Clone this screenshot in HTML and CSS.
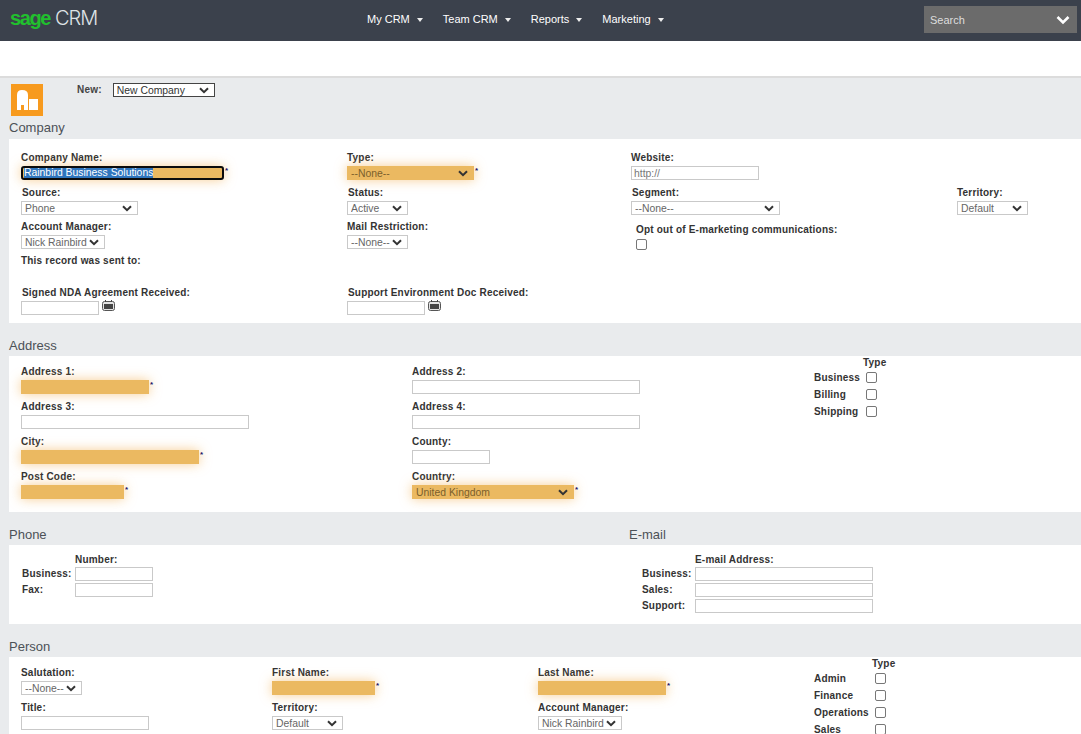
FILE: index.html
```html
<!DOCTYPE html>
<html lang="en">
<head>
  <meta charset="UTF-8" />
  <title>Sage CRM - New Company</title>
  <link rel="stylesheet" href="styles.css">
</head>
<body>
  <header class="topbar">
    <div class="logo"><span class="logo-sage">sage</span><span class="logo-crm">CRM</span></div>
    <nav class="menu">
      <a class="menu-item">My CRM</a>
      <a class="menu-item">Team CRM</a>
      <a class="menu-item">Reports</a>
      <a class="menu-item">Marketing</a>
    </nav>
    <div class="search">
      <span>Search</span>
      <svg width="14" height="10" viewBox="0 0 14 10"><path d="M1.5 2 L7 7.5 L12.5 2" fill="none" stroke="#fff" stroke-width="2.6"/></svg>
    </div>
  </header>
  <div class="subbar"></div>

  <div class="newbar">
    <div class="entity-icon">
      <svg width="32" height="32" viewBox="0 0 32 32">
        <path d="M6 26 V11 Q6 6 11 6 Q17 6 17 11 V26 H13 V21 H10 V26 Z" fill="#fff"/>
        <rect x="18" y="15" width="9" height="11" fill="#fff"/>
      </svg>
    </div>
    <label class="new-label">New:</label>
    <select class="new-select"><option>New Company</option></select>
  </div>

  <h2 class="section-title first">Company</h2>
  <section class="panel company-panel">
    <div class="fields company-fields">
      <div class="field">
        <label>Company Name:</label>
        <div class="req-wrap">
          <div class="name-input"><span class="selected">Rainbird Business Solutions</span></div><i>*</i>
        </div>
      </div>
      <div class="field">
        <label>Type:</label>
        <div class="req-wrap"><select class="req w-127"><option>--None--</option></select><i>*</i></div>
      </div>
      <div class="field span-2">
        <label>Website:</label>
        <input class="w-128 hint" value="http://">
      </div>

      <div class="field">
        <label class="nudge">Source:</label>
        <select class="w-117"><option>Phone</option></select>
      </div>
      <div class="field">
        <label class="nudge">Status:</label>
        <select class="w-61"><option>Active</option></select>
      </div>
      <div class="field">
        <label class="nudge">Segment:</label>
        <select class="w-149"><option>--None--</option></select>
      </div>
      <div class="field">
        <label>Territory:</label>
        <select class="w-71"><option>Default</option></select>
      </div>

      <div class="field">
        <label>Account Manager:</label>
        <select class="w-84"><option>Nick Rainbird</option></select>
      </div>
      <div class="field">
        <label>Mail Restriction:</label>
        <select class="w-61"><option>--None--</option></select>
      </div>
      <div class="field span-2 optout">
        <label>Opt out of E-marketing communications:</label>
        <input type="checkbox">
      </div>

      <div class="field span-4">
        <label>This record was sent to:</label>
      </div>

      <div class="field">
        <label class="nudge">Signed NDA Agreement Received:</label>
        <div class="date-wrap"><input class="w-78"><svg class="cal" width="13" height="11" viewBox="0 0 13 11"><rect x="0.5" y="1.5" width="12" height="9" rx="2" fill="#e3e3e3" stroke="#555"/><rect x="2" y="4" width="9" height="5" fill="#444"/><path d="M3.5 0 V2 M9.5 0 V2" stroke="#444"/></svg></div>
      </div>
      <div class="field span-3">
        <label class="nudge">Support Environment Doc Received:</label>
        <div class="date-wrap"><input class="w-78"><svg class="cal" width="13" height="11" viewBox="0 0 13 11"><rect x="0.5" y="1.5" width="12" height="9" rx="2" fill="#e3e3e3" stroke="#555"/><rect x="2" y="4" width="9" height="5" fill="#444"/><path d="M3.5 0 V2 M9.5 0 V2" stroke="#444"/></svg></div>
      </div>
    </div>
  </section>

  <h2 class="section-title">Address</h2>
  <section class="panel address-panel">
    <div class="fields address-fields">
      <div class="field">
        <label>Address 1:</label>
        <div class="req-wrap"><input class="req w-128"><i>*</i></div>
      </div>
      <div class="field">
        <label>Address 2:</label>
        <input class="w-228">
      </div>
      <div class="field">
        <label>Address 3:</label>
        <input class="w-228">
      </div>
      <div class="field">
        <label>Address 4:</label>
        <input class="w-228">
      </div>
      <div class="field">
        <label>City:</label>
        <div class="req-wrap"><input class="req w-178"><i>*</i></div>
      </div>
      <div class="field">
        <label>County:</label>
        <input class="w-78">
      </div>
      <div class="field">
        <label>Post Code:</label>
        <div class="req-wrap"><input class="req w-103"><i>*</i></div>
      </div>
      <div class="field">
        <label>Country:</label>
        <div class="req-wrap"><select class="req w-162"><option>United Kingdom</option></select><i>*</i></div>
      </div>
    </div>
    <div class="type-group address-type">
      <div class="type-head">Type</div>
      <div class="type-row"><label>Business</label><input type="checkbox"></div>
      <div class="type-row"><label>Billing</label><input type="checkbox"></div>
      <div class="type-row"><label>Shipping</label><input type="checkbox"></div>
    </div>
  </section>

  <div class="title-pair">
    <h2 class="section-title">Phone</h2>
    <h2 class="section-title">E-mail</h2>
  </div>
  <section class="panel contact-panel">
    <div class="contact phone">
      <div></div><label class="contact-head">Number:</label>
      <label>Business:</label><input class="w-78">
      <label>Fax:</label><input class="w-78">
    </div>
    <div class="contact email">
      <div></div><label class="contact-head">E-mail Address:</label>
      <label>Business:</label><input class="w-178">
      <label>Sales:</label><input class="w-178">
      <label>Support:</label><input class="w-178">
    </div>
  </section>

  <h2 class="section-title">Person</h2>
  <section class="panel person-panel">
    <div class="fields person-fields">
      <div class="field">
        <label>Salutation:</label>
        <select class="w-61"><option>--None--</option></select>
      </div>
      <div class="field">
        <label>First Name:</label>
        <div class="req-wrap"><input class="req w-103"><i>*</i></div>
      </div>
      <div class="field">
        <label>Last Name:</label>
        <div class="req-wrap"><input class="req w-128"><i>*</i></div>
      </div>
      <div class="field">
        <label>Title:</label>
        <input class="w-128">
      </div>
      <div class="field">
        <label>Territory:</label>
        <select class="w-71"><option>Default</option></select>
      </div>
      <div class="field">
        <label>Account Manager:</label>
        <select class="w-84"><option>Nick Rainbird</option></select>
      </div>
    </div>
    <div class="type-group person-type">
      <div class="type-head">Type</div>
      <div class="type-row"><label>Admin</label><input type="checkbox"></div>
      <div class="type-row"><label>Finance</label><input type="checkbox"></div>
      <div class="type-row"><label>Operations</label><input type="checkbox"></div>
      <div class="type-row"><label>Sales</label><input type="checkbox"></div>
    </div>
  </section>
</body>
</html>
```

FILE: styles.css
```css
html, body {
  height: 100%;
  overflow: hidden;
}

body {
  margin: 0;
  background: #e9ebed;
  font-family: "Liberation Sans", Arial, sans-serif;
  font-size: 11px;
  color: #333;
}

/* top bar */
.topbar {
  display: flex;
  align-items: center;
  height: 41px;
  background: #3b414c;
}

.logo {
  display: flex;
  align-items: baseline;
  width: 367px;
  padding: 0 0 5px 10px;
  box-sizing: border-box;
}

.logo-sage {
  color: #21c02e;
  font-size: 20px;
  font-weight: bold;
  letter-spacing: -1.4px;
}

.logo-crm {
  margin-left: 5px;
  color: #dfe3e6;
  font-family: Inter, sans-serif;
  font-size: 20px;
  font-weight: 300;
  letter-spacing: -1px;
}

.menu {
  display: flex;
  gap: 14px;
  margin-bottom: 3px;
}

.menu-item {
  color: #fff;
  font-size: 11px;
  padding-right: 19px;
  position: relative;
}

.menu-item::after {
  content: "";
  position: absolute;
  right: 6px;
  top: 5px;
  border-left: 3.5px solid transparent;
  border-right: 3.5px solid transparent;
  border-top: 4px solid #eee;
}

.search {
  display: flex;
  align-items: center;
  justify-content: space-between;
  margin-left: auto;
  margin-right: 4px;
  margin-bottom: 2px;
  width: 153px;
  height: 27px;
  padding: 0 7px 0 6px;
  box-sizing: border-box;
  background: #6b6b6b;
  color: #ddd;
  font-size: 11px;
}

.subbar {
  height: 35px;
  background: #fff;
  border-bottom: 2px solid #dcdcdc;
}

/* new company row */
.newbar {
  display: flex;
  align-items: flex-start;
  height: 32px;
  padding: 6px 0 0 11px;
}

.entity-icon {
  width: 32px;
  height: 32px;
  background: #f79a1e;
}

.new-label {
  margin-left: 34px;
  margin-top: -1px;
  color: #444;
}

.new-select {
  margin-left: 11px;
  margin-top: -1px;
  width: 102px;
  border-color: #444;
  color: #333;
}

.section-title {
  margin: 0;
  height: 33px;
  box-sizing: border-box;
  padding: 15px 0 0 9px;
  font-size: 13px;
  line-height: 16px;
  font-weight: normal;
  color: #4c5157;
}

.section-title.first {
  height: 23px;
  padding-top: 4px;
}

.title-pair {
  display: grid;
  grid-template-columns: 620px 1fr;
}

.panel {
  display: flex;
  margin-left: 9px;
  padding-left: 12px;
  background: #fff;
}

/* form fields */
.fields {
  display: grid;
}

.company-panel {
  height: 184px;
}

.company-fields {
  grid-template-columns: 326px 284px 326px 1fr;
  grid-template-rows: 35px 34px 34px 32px 36px;
  width: 100%;
  padding-top: 12px;
}

.address-panel {
  height: 156px;
}

.address-fields {
  grid-template-columns: 391px 402px;
  grid-auto-rows: 35px;
  padding-top: 9px;
}

.person-panel {
  height: 100px;
}

.person-fields {
  grid-template-columns: 251px 266px 276px;
  grid-auto-rows: 35px;
  padding-top: 9px;
}

.field {
  display: flex;
  flex-direction: column;
  align-items: flex-start;
}

.span-2 {
  grid-column: span 2;
}

.span-3 {
  grid-column: span 3;
}

.span-4 {
  grid-column: span 4;
}

label {
  height: 13px;
  line-height: 13px;
  margin-bottom: 2px;
  font-size: 10px;
  font-weight: bold;
  letter-spacing: 0.2px;
  color: #333;
  white-space: nowrap;
}

.nudge {
  margin-left: 1px;
}

input, select {
  box-sizing: border-box;
  height: 14px;
  margin: 0;
  padding: 0 0 0 2px;
  border: 1px solid #c9c9c9;
  border-radius: 0;
  background-color: #fff;
  font-family: "Liberation Sans", Arial, sans-serif;
  font-size: 10.4px;
  color: #666;
}

select {
  appearance: none;
  padding: 0 0 0 3px;
  background-image: url("data:image/svg+xml,%3Csvg xmlns='http://www.w3.org/2000/svg' width='10' height='7' viewBox='0 0 10 7'%3E%3Cpath d='M1 1.2 L5 5.2 L9 1.2' fill='none' stroke='%23333' stroke-width='2'/%3E%3C/svg%3E");
  background-repeat: no-repeat;
  background-position: right 5px center;
}

input[type="checkbox"] {
  appearance: none;
  width: 11px;
  height: 11px;
  margin: 0;
  padding: 0;
  border: 1px solid #777;
  border-radius: 2px;
}

.hint {
  color: #777;
}

.req-wrap {
  display: flex;
  align-items: flex-start;
}

.req-wrap i {
  margin-left: 1px;
  font-style: normal;
  font-size: 8px;
  line-height: 10px;
  font-weight: bold;
  color: #1b1464;
}

.req {
  border-color: #ebb961;
  background-color: #ebb961;
  color: #7a5f2c;
  box-shadow: 0 0 12px rgba(240, 165, 60, 0.55);
}

.name-input {
  box-sizing: border-box;
  width: 203px;
  height: 14px;
  padding-left: 1px;
  font-size: 10.4px;
  line-height: 10px;
  border: 2px solid #0c0c0c;
  border-radius: 3px;
  background: #ebb961;
  box-shadow: 0 0 12px rgba(240, 165, 60, 0.55);
}

.selected {
  display: inline-block;
  height: 10px;
  background: #2f75bd;
  color: #fff;
}

.date-wrap {
  display: flex;
  align-items: flex-start;
  gap: 3px;
}

.cal {
  margin-top: -1px;
}

.optout {
  padding-left: 5px;
  margin-top: 3px;
}

.optout label {
  margin-bottom: 3px;
}

.w-61 { width: 61px; }
.w-71 { width: 71px; }
.w-78 { width: 78px; }
.w-84 { width: 84px; }
.w-103 { width: 103px; }
.w-117 { width: 117px; }
.w-127 { width: 127px; }
.w-128 { width: 128px; }
.w-149 { width: 149px; }
.w-162 { width: 162px; }
.w-178 { width: 178px; }
.w-228 { width: 228px; }

/* type checkbox groups */
.type-group {
  display: flex;
  flex-direction: column;
  padding-top: 1px;
}

.type-head {
  font-size: 10px;
  font-weight: bold;
  letter-spacing: 0.2px;
  line-height: 12px;
  color: #333;
}

.type-row {
  display: grid;
  align-items: center;
  height: 17px;
}

.address-type .type-head {
  margin-left: 49px;
}

.address-type .type-row {
  grid-template-columns: 52px 11px;
}

.person-type .type-head {
  margin-left: 58px;
}

.person-type .type-row {
  grid-template-columns: 61px 11px;
}

.type-row label {
  margin: 0;
}

/* phone and e-mail */
.contact-panel {
  height: 79px;
  padding-left: 0;
}

.contact {
  display: grid;
  align-content: start;
  padding-top: 8px;
  row-gap: 2px;
}

.contact label {
  margin: 0;
  line-height: 14px;
  height: 14px;
}

.contact .contact-head {
  margin-bottom: -2px;
}

.phone {
  grid-template-columns: 53px 78px;
  width: 620px;
  box-sizing: border-box;
  padding-left: 13px;
}

.email {
  grid-template-columns: 53px 178px;
  padding-left: 13px;
}
```
